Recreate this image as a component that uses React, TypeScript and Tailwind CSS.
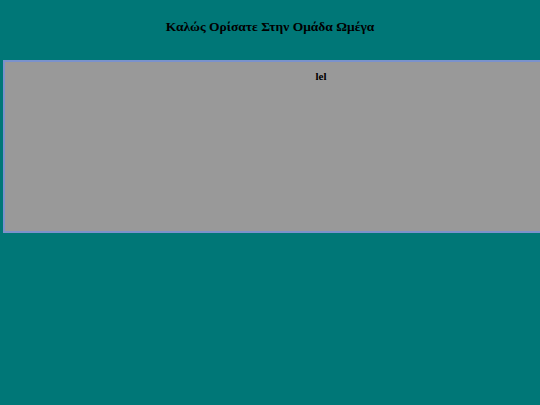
export default function App() {
  return (
    <div className="h-[405px] w-[540px] overflow-hidden bg-[#007777] font-['Liberation_Serif',serif] text-black">
      <h1 className="pt-[18px] text-center text-[13.5px] font-bold leading-[17px]">
        Καλώς Ορίσατε Στην Ομάδα Ωμέγα
      </h1>
      <div className="ml-[3px] mt-[25px] h-[173px] w-[636px] border-2 border-[#7b92cc] bg-[#999999] pt-[7px] text-center text-[11px] font-bold leading-[14px]">
        lel
      </div>
    </div>
  );
}
